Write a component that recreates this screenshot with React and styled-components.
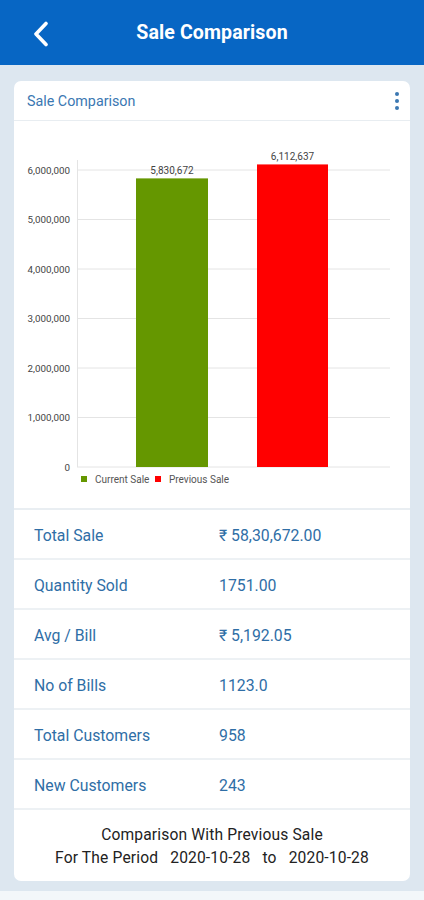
import React from "react";
import styled, { createGlobalStyle } from "styled-components";

const Global = createGlobalStyle`
  html, body { margin: 0; padding: 0; background: #f3f7fa; }
  body { font-family: Roboto, "Noto Sans", Arial, sans-serif; }
  * { box-sizing: border-box; }
`;

const Page = styled.div`
  width: 424px;
  background: #dde7f0;
  padding-bottom: 10px;
`;

const Header = styled.header`
  height: 65px;
  background: #0766c4;
  display: flex;
  align-items: center;
  position: relative;
  justify-content: center;
`;

const BackBtn = styled.div`
  position: absolute;
  left: 30px;
  top: 20px;
  width: 22px;
  height: 28px;
  display: flex;
  align-items: center;
  justify-content: center;
`;

const Title = styled.h1`
  margin: 0;
  color: #fff;
  font-size: 19.6px;
  font-weight: 700;
  letter-spacing: 0.1px;
`;

const Body = styled.main`
  padding: 16px 14px 0;
`;

const Card = styled.section`
  background: #fff;
  border-radius: 7px;
  overflow: hidden;
`;

const CardHead = styled.div`
  height: 40px;
  display: flex;
  align-items: center;
  justify-content: space-between;
  padding: 0 10px 0 13px;
  border-bottom: 1px solid #e8edf1;
`;

const CardTitle = styled.span`
  color: #3b78b2;
  font-size: 14.3px;
`;

const ChartWrap = styled.div`
  height: 389px;
  border-bottom: 2px solid #e9eef2;
`;

const Row = styled.div`
  height: 50px;
  display: flex;
  align-items: center;
  padding: 2px 0 0 20px;
  border-bottom: 2px solid #edf1f4;
  color: #2f6ea6;
  font-size: 15.8px;
`;

const Label = styled.span`
  width: 185px;
`;

const Value = styled.span``;

const Footer = styled.div`
  padding: 14px 0 11px;
  text-align: center;
  color: #222;
  font-size: 15.6px;
  letter-spacing: 0.15px;
  line-height: 23px;
  white-space: pre;
`;

const rows = [
  ["Total Sale", "₹ 58,30,672.00"],
  ["Quantity Sold", "1751.00"],
  ["Avg / Bill", "₹ 5,192.05"],
  ["No of Bills", "1123.0"],
  ["Total Customers", "958"],
  ["New Customers", "243"],
];

const ticks = [6, 5, 4, 3, 2, 1, 0];
const y0 = 346;
const per = 49.5;
const FONT = "Roboto, Arial, sans-serif";

function Chart() {
  const bars = [
    { x: 122, w: 72, v: 5830672, label: "5,830,672", color: "#659700" },
    { x: 243, w: 71, v: 6112637, label: "6,112,637", color: "#ff0000" },
  ];
  return (
    <svg width="396" height="387" viewBox="0 0 396 387" style={{ display: "block" }}>
      {ticks.map((t) => {
        const y = y0 - t * per;
        return (
          <g key={t}>
            <line x1="63" x2="376" y1={y} y2={y} stroke="#e4e4e4" strokeWidth="1" />
            <text x="56" y={y + 3.5} textAnchor="end" fontSize="9.8" fill="#444" fontFamily={FONT}>
              {t === 0 ? "0" : `${t},000,000`}
            </text>
          </g>
        );
      })}
      <line x1="63.5" x2="63.5" y1={y0 - 6 * per - 10} y2={y0} stroke="#e4e4e4" strokeWidth="1" />
      {bars.map((b) => {
        const h = (b.v / 1e6) * per;
        return (
          <g key={b.label}>
            <rect x={b.x} y={y0 - h} width={b.w} height={h} fill={b.color} />
            <text x={b.x + b.w / 2} y={y0 - h - 4} textAnchor="middle" fontSize="10" fill="#444" fontFamily={FONT}>
              {b.label}
            </text>
          </g>
        );
      })}
      <rect x="67" y="355" width="6" height="6" fill="#659700" />
      <text x="81" y="361.5" fontSize="10" fill="#555" fontFamily={FONT}>Current Sale</text>
      <rect x="141" y="355" width="6" height="6" fill="#ff0000" />
      <text x="155" y="361.5" fontSize="10" fill="#555" fontFamily={FONT}>Previous Sale</text>
    </svg>
  );
}

export default function App() {
  return (
    <>
      <Global />
      <Page>
        <Header>
          <BackBtn>
            <svg width="16" height="26" viewBox="0 0 16 26">
              <path d="M13 2.5 L3 13 L13 23.5" fill="none" stroke="#fff" strokeWidth="3.6" strokeLinecap="round" strokeLinejoin="round" />
            </svg>
          </BackBtn>
          <Title>Sale Comparison</Title>
        </Header>
        <Body>
          <Card>
            <CardHead>
              <CardTitle>Sale Comparison</CardTitle>
              <svg width="6" height="20" viewBox="0 0 6 20">
                <circle cx="3" cy="3" r="2" fill="#3b78b2" />
                <circle cx="3" cy="10" r="2" fill="#3b78b2" />
                <circle cx="3" cy="17" r="2" fill="#3b78b2" />
              </svg>
            </CardHead>
            <ChartWrap>
              <Chart />
            </ChartWrap>
            {rows.map(([l, v]) => (
              <Row key={l}>
                <Label>{l}</Label>
                <Value>{v}</Value>
              </Row>
            ))}
            <Footer>
              {"Comparison With Previous Sale\nFor The Period   2020-10-28   to   2020-10-28"}
            </Footer>
          </Card>
        </Body>
      </Page>
    </>
  );
}
